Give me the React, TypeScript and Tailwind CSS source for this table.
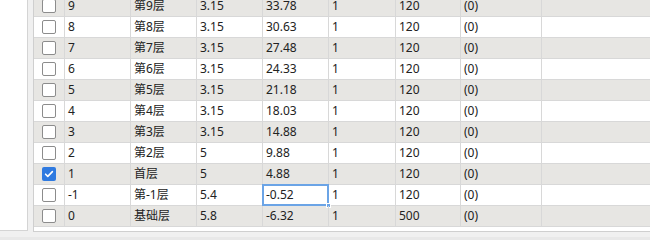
import React from 'react'

type Floor = {
  no: string
  name: string
  height: string
  elevation: string
  count: string
  thick: string
  extra: string
  checked?: boolean
  active?: boolean
}

const floors: Floor[] = [
  { no: '9', name: '第9层', height: '3.15', elevation: '33.78', count: '1', thick: '120', extra: '(0)' },
  { no: '8', name: '第8层', height: '3.15', elevation: '30.63', count: '1', thick: '120', extra: '(0)' },
  { no: '7', name: '第7层', height: '3.15', elevation: '27.48', count: '1', thick: '120', extra: '(0)' },
  { no: '6', name: '第6层', height: '3.15', elevation: '24.33', count: '1', thick: '120', extra: '(0)' },
  { no: '5', name: '第5层', height: '3.15', elevation: '21.18', count: '1', thick: '120', extra: '(0)' },
  { no: '4', name: '第4层', height: '3.15', elevation: '18.03', count: '1', thick: '120', extra: '(0)' },
  { no: '3', name: '第3层', height: '3.15', elevation: '14.88', count: '1', thick: '120', extra: '(0)' },
  { no: '2', name: '第2层', height: '5', elevation: '9.88', count: '1', thick: '120', extra: '(0)' },
  { no: '1', name: '首层', height: '5', elevation: '4.88', count: '1', thick: '120', extra: '(0)', checked: true },
  { no: '-1', name: '第-1层', height: '5.4', elevation: '-0.52', count: '1', thick: '120', extra: '(0)', active: true },
  { no: '0', name: '基础层', height: '5.8', elevation: '-6.32', count: '1', thick: '500', extra: '(0)' },
]

const CheckBox: React.FC<{ checked?: boolean }> = ({ checked }) =>
  checked ? (
    <div className="w-[14px] h-[14px] rounded-[2px] bg-[#2f7ae0] flex items-center justify-center">
      <svg width="10" height="10" viewBox="0 0 10 10" fill="none">
        <path d="M1.6 5.2l2.2 2.2L8.4 2.6" stroke="#fff" strokeWidth="1.6" strokeLinecap="round" strokeLinejoin="round" />
      </svg>
    </div>
  ) : (
    <div className="w-[14px] h-[14px] rounded-[2px] border border-[#8c8c8c] bg-white" />
  )

const Cell: React.FC<{ children?: React.ReactNode; active?: boolean }> = ({ children, active }) => (
  <div className="relative border-r border-[#d8d8d8] pl-[3px] flex items-center whitespace-nowrap">
    {children}
    {active && (
      <>
        <div className="absolute -left-[1px] -top-[1px] -right-[1px] -bottom-[1px] border-2 border-[#6ba4e6]" />
        <div className="absolute -right-[3px] -bottom-[3px] w-[5px] h-[5px] bg-[#6ba4e6] border border-white" />
      </>
    )}
  </div>
)

const App: React.FC = () => {
  return (
    <div
      className="w-[650px] h-[240px] bg-[#f0f0f0] flex flex-col overflow-hidden text-[12px] text-[#222]"
      style={{ fontFamily: '"Noto Sans", "Noto Sans CJK SC", sans-serif' }}
    >
      <div className="h-[237px] flex items-start">
        {/* tree panel on the left */}
        <div className="w-[28px] h-[231px] bg-white border-r border-b border-[#d4d4d4]" />

        {/* floor table */}
        <div className="ml-[5px] flex-1 h-[232px] bg-white border-l border-b border-[#cfcfcf] overflow-hidden">
          <div className="-mt-[4px]">
            {floors.map((f) => (
              <div
                key={f.no}
                className={`grid grid-cols-[31px_66px_66px_66px_66px_67px_65px_81px_1fr] h-[21px] border-b border-[#d8d8d8] leading-[20px] ${
                  f.no === '8' || f.no === '6' || f.no === '4' || f.no === '2' || f.no === '-1' ? 'bg-white' : 'bg-[#e7e6e3]'
                }`}
              >
                <div className="border-r border-[#d8d8d8] flex items-center justify-center">
                  <CheckBox checked={f.checked} />
                </div>
                <Cell>{f.no}</Cell>
                <Cell>{f.name}</Cell>
                <Cell>{f.height}</Cell>
                <Cell active={f.active}>{f.elevation}</Cell>
                <Cell>{f.count}</Cell>
                <Cell>{f.thick}</Cell>
                <Cell>{f.extra}</Cell>
                <div />
              </div>
            ))}
          </div>
        </div>
      </div>
      <div className="flex-1 bg-[#e8e8e8]" />
    </div>
  )
}

export default App
